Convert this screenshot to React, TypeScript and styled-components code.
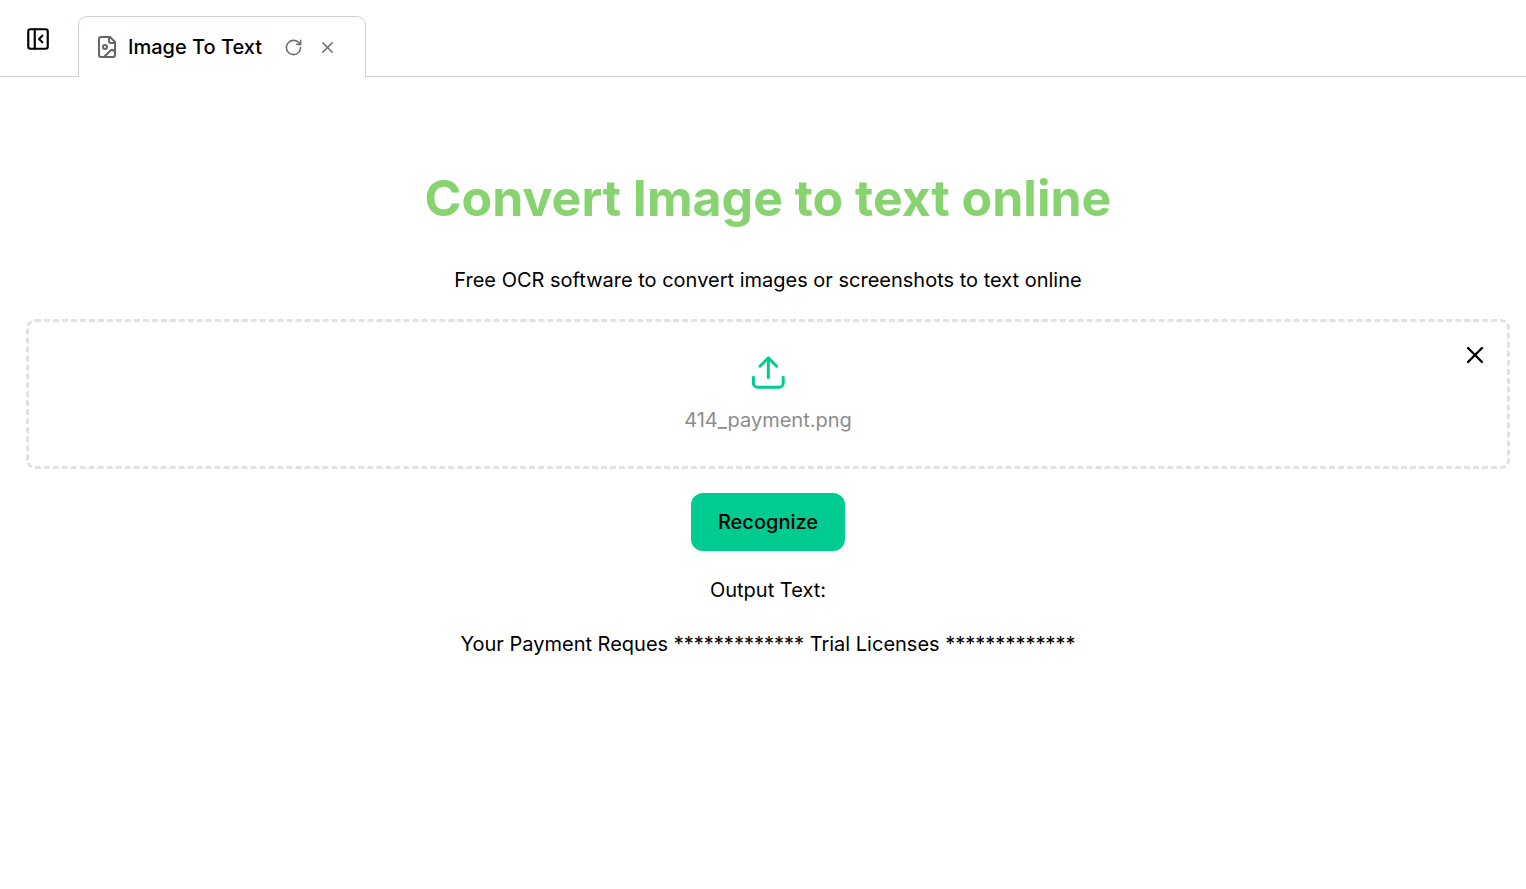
import React, { useState } from "react";
import styled, { createGlobalStyle } from "styled-components";
import { PanelLeftClose, RotateCw, X } from "lucide-react";

const GlobalStyle = createGlobalStyle`
  *, *::before, *::after { box-sizing: border-box; }
  body {
    margin: 0;
    background: #ffffff;
    color: #000000;
    font-family: Inter, "Liberation Sans", sans-serif;
    font-size: 20px;
    line-height: 30px;
  }
  h1, p { margin: 0; }
  button { font: inherit; color: inherit; cursor: pointer; }
`;

const TabBar = styled.header`
  display: flex;
  align-items: flex-end;
  height: 77px;
`;

const BarGap = styled.div<{ $grow?: boolean }>`
  align-self: stretch;
  flex: ${(p) => (p.$grow ? "1" : "0 0 78px")};
  border-bottom: 1px solid #d1d1db;
  padding: 26px 25px;
`;

const IconButton = styled.button<{ $muted?: boolean }>`
  display: flex;
  padding: 0;
  border: 0;
  background: none;
  color: ${(p) => (p.$muted ? "#707070" : "#000000")};
`;

const Tab = styled.div`
  display: flex;
  align-items: center;
  width: 288px;
  height: 61px;
  padding: 0 18px 0 16px;
  border: 1px solid #d1d1db;
  border-bottom: 0;
  border-radius: 9px 9px 0 0;
  color: #666666;
`;

const TabTitle = styled.span`
  flex: 1;
  margin-left: 9px;
  color: #000000;
  font-weight: 500;
  white-space: nowrap;
`;

const TabActions = styled.div`
  display: flex;
  align-items: center;
  gap: 15px;
  margin-right: 10px;
`;

const Main = styled.main`
  display: flex;
  flex-direction: column;
  align-items: center;
  padding: 88px 16px 24px 26px;
  text-align: center;
`;

const Title = styled.h1`
  color: #86d36f;
  font-size: 50px;
  font-weight: 700;
  line-height: 66px;
`;

const Subtitle = styled.p`
  margin-top: 34px;
`;

const DropZone = styled.section`
  position: relative;
  display: flex;
  flex-direction: column;
  align-items: center;
  align-self: stretch;
  height: 150px;
  margin-top: 24px;
  padding-top: 33px;
  border: 3px dashed #e2e2e2;
  border-radius: 9px;
`;

const FileName = styled.p`
  margin-top: 14px;
  color: #8c8c8c;
`;

const RemoveButton = styled(IconButton)`
  position: absolute;
  top: 19px;
  right: 18px;
`;

const PrimaryButton = styled.button`
  height: 58px;
  margin-top: 24px;
  padding: 0 27px;
  border: 0;
  border-radius: 12px;
  background: #00cc92;
  box-shadow: 0 2px 3px rgba(0, 0, 0, 0.06);
  font-weight: 500;
`;

const Output = styled.section`
  display: flex;
  flex-direction: column;
  gap: 24px;
  margin-top: 24px;
`;

const ImageFileIcon = () => (
  <svg
    width="24"
    height="24"
    viewBox="0 0 24 24"
    fill="none"
    stroke="currentColor"
    strokeWidth="2"
    strokeLinecap="round"
    strokeLinejoin="round"
    aria-hidden="true"
  >
    <path d="M15 2H6a2 2 0 0 0-2 2v16a2 2 0 0 0 2 2h12a2 2 0 0 0 2-2V7Z" />
    <path d="M14 2v4a2 2 0 0 0 2 2h4" />
    <circle cx="10" cy="12" r="2" />
    <path d="m20 17-1.3-1.3a2.41 2.41 0 0 0-3.4 0L9 22" />
  </svg>
);

const UploadIcon = () => (
  <svg
    width="36"
    height="36"
    viewBox="0 0 36 36"
    fill="none"
    stroke="#00cc92"
    strokeWidth="3"
    strokeLinecap="round"
    strokeLinejoin="round"
    aria-hidden="true"
  >
    <path d="M3.4 22.2v6a4 4 0 0 0 4 4h21.8a4 4 0 0 0 4-4v-6" />
    <path d="M18.3 22.5V3" />
    <path d="M10 11.2 18.3 3l8.3 8.2" />
  </svg>
);

export default function App() {
  const [file, setFile] = useState("414_payment.png");

  return (
    <>
      <GlobalStyle />
      <TabBar>
        <BarGap>
          <IconButton aria-label="Close sidebar">
            <PanelLeftClose size={26} />
          </IconButton>
        </BarGap>
        <Tab>
          <ImageFileIcon />
          <TabTitle>Image To Text</TabTitle>
          <TabActions>
            <IconButton $muted aria-label="Reload tab">
              <RotateCw size={19} />
            </IconButton>
            <IconButton $muted aria-label="Close tab">
              <X size={19} />
            </IconButton>
          </TabActions>
        </Tab>
        <BarGap $grow />
      </TabBar>
      <Main>
        <Title>Convert Image to text online</Title>
        <Subtitle>Free OCR software to convert images or screenshots to text online</Subtitle>
        <DropZone>
          <UploadIcon />
          <FileName>{file}</FileName>
          <RemoveButton aria-label="Remove file" onClick={() => setFile("")}>
            <X size={28} />
          </RemoveButton>
        </DropZone>
        <PrimaryButton>Recognize</PrimaryButton>
        <Output>
          <p>Output Text:</p>
          <p>Your Payment Reques ************* Trial Licenses *************</p>
        </Output>
      </Main>
    </>
  );
}
